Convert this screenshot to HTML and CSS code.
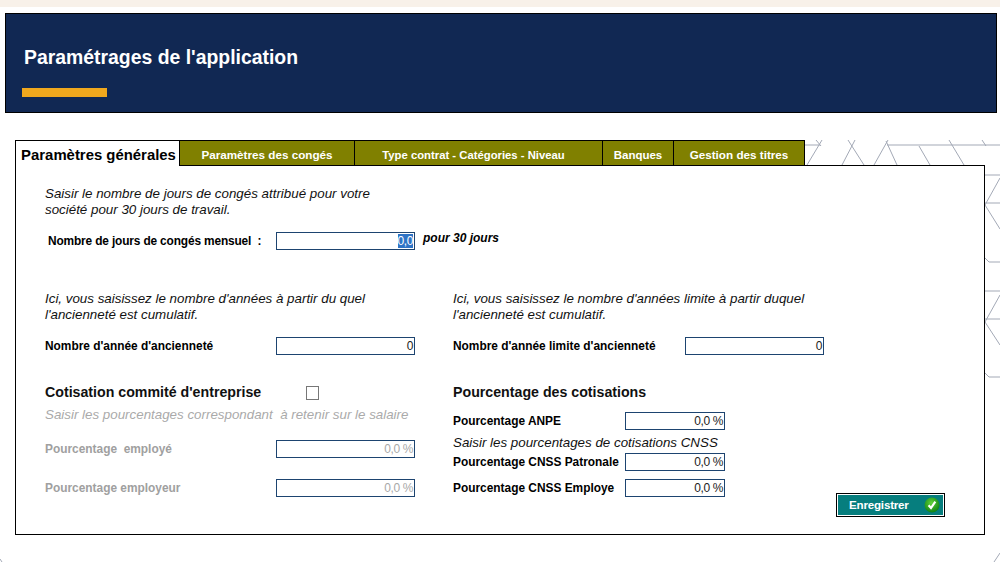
FILE: index.html
```html
<!DOCTYPE html>
<html lang="fr">
<head>
<meta charset="utf-8">
<title>Paramétrages de l'application</title>
<link rel="stylesheet" href="styles.css">
</head>
<body>
<svg class="backdrop" width="1000" height="562" viewBox="0 0 1000 562" fill="none" stroke="#a3a9b6" stroke-width="1">
  <path d="M805 145H820M822 140L807 165M816 140L821 146M848 140L864 165M855 140L842 165M888 140L874 165M886 141L897 165M887 145H1000M919 146L930 165M949 140L964 165M982 140L986 146"/>
  <path d="M984 175H1000M1000 178L985 205L1000 229M985 203H1000M984 257L989 262H1000M984 291H1000M1000 295L985 322L1000 345M985 319H1000M984 372L989 377H1000M1000 553L994 562M0 559L2 562"/>
</svg>
<header class="banner">
  <h1 class="banner-title">Paramétrages de l'application</h1>
  <div class="banner-accent"></div>
</header>
<main class="settings">
  <nav class="tabs">
    <div class="tab tab-active">Paramètres générales</div>
    <div class="tab tab-conges">Paramètres des congés</div>
    <div class="tab tab-type">Type contrat - Catégories - Niveau</div>
    <div class="tab tab-banques">Banques</div>
    <div class="tab tab-titres">Gestion des titres</div>
  </nav>
  <section class="panel">
    <div class="top-block">
      <p class="note note-top">Saisir le nombre de jours de congés attribué pour votre<br>société pour 30 jours de travail.</p>
      <div class="row row-top">
        <label class="label label-mensuel">Nombre de jours de congés mensuel&nbsp; :</label>
        <div class="field field-wide"><span class="selected">0,0</span></div>
        <span class="suffix">pour 30 jours</span>
      </div>
    </div>
    <div class="columns">
      <div class="col col-left">
        <p class="note">Ici, vous saisissez le nombre d'années à partir du quel<br>l'ancienneté est cumulatif.</p>
        <div class="row row-seniority">
          <label class="label label-left">Nombre d'année d'ancienneté</label>
          <div class="field field-wide">0</div>
        </div>
        <div class="heading-row">
          <h2 class="heading">Cotisation commité d'entreprise</h2>
          <span class="checkbox"></span>
        </div>
        <p class="note note-muted">Saisir les pourcentages correspondant&nbsp; à retenir sur le salaire</p>
        <div class="row row-employe">
          <label class="label label-left label-muted">Pourcentage&nbsp; employé</label>
          <div class="field field-wide field-muted">0,0 %</div>
        </div>
        <div class="row row-employeur">
          <label class="label label-left label-muted">Pourcentage employeur</label>
          <div class="field field-wide field-muted">0,0 %</div>
        </div>
      </div>
      <div class="col col-right">
        <p class="note">Ici, vous saisissez le nombre d'années limite à partir duquel<br>l'ancienneté est cumulatif.</p>
        <div class="row row-seniority">
          <label class="label label-limit">Nombre d'année limite d'ancienneté</label>
          <div class="field field-wide">0</div>
        </div>
        <h2 class="heading heading-right">Pourcentage des cotisations</h2>
        <div class="row row-anpe">
          <label class="label label-right">Pourcentage ANPE</label>
          <div class="field field-small">0,0 %</div>
        </div>
        <p class="note note-cnss">Saisir les pourcentages de cotisations CNSS</p>
        <div class="row row-patronale">
          <label class="label label-right">Pourcentage CNSS Patronale</label>
          <div class="field field-small">0,0 %</div>
        </div>
        <div class="row row-employee">
          <label class="label label-right">Pourcentage CNSS Employe</label>
          <div class="field field-small">0,0 %</div>
        </div>
      </div>
    </div>
    <button class="save" type="button">
      <span class="save-text">Enregistrer</span>
      <svg width="16" height="16" viewBox="0 0 16 16" aria-hidden="true">
        <defs><radialGradient id="g" cx="45%" cy="35%" r="70%"><stop offset="0" stop-color="#5fd03a"/><stop offset="1" stop-color="#0a7d12"/></radialGradient></defs>
        <circle cx="8" cy="8" r="7.5" fill="url(#g)"/>
        <path d="M4.6 8.2L7 11L11.3 4.6" fill="none" stroke="#fff" stroke-width="2.2"/>
      </svg>
    </button>
  </section>
</main>
</body>
</html>
```
FILE: styles.css
```css
* { box-sizing: border-box; }
html, body { margin: 0; padding: 0; }
body {
  width: 1000px;
  height: 562px;
  overflow: hidden;
  position: relative;
  padding: 13px 0 0 5px;
  background: linear-gradient(#f8f1e9 0 7px, #fff 7px);
  font-family: "Liberation Sans", Arial, sans-serif;
  color: #000;
}
.backdrop { position: absolute; left: 0; top: 0; }
.banner {
  position: relative;
  width: 992px;
  height: 100px;
  background: #112853;
  border: 1px solid #000;
  padding: 31px 0 0 18px;
}
.banner-title {
  margin: 0;
  font-size: 19.4px;
  line-height: 24px;
  font-weight: 700;
  color: #fff;
}
.banner-accent {
  width: 85px;
  height: 9px;
  margin: 19px 0 0 -2px;
  background: #f0a81e;
}
.settings {
  position: relative;
  width: 970px;
  margin: 27px 0 0 10px;
}
.tabs { display: flex; height: 26px; }
.tab {
  height: 26px;
  display: flex;
  align-items: center;
  justify-content: center;
  background: #808000;
  color: #fff;
  font-size: 11.7px;
  font-weight: 700;
  border: 1px solid #000;
  border-left: 0;
  padding-top: 2px;
}
.tab-active {
  width: 165px;
  background: #fff;
  color: #000;
  font-size: 14.9px;
  border-left: 1px solid #000;
  border-bottom: 0;
  position: relative;
  z-index: 1;
  padding: 2px 0 0 2px;
}
.tab-conges { width: 175px; }
.tab-type { width: 248px; font-size: 11.3px; padding: 4px 10px 0 0; }
.tab-banques { width: 71px; font-size: 11.5px; padding-top: 4px; }
.tab-titres { width: 131px; }
.panel {
  position: relative;
  width: 970px;
  height: 370px;
  margin-top: -1px;
  background: #fff;
  border: 1px solid #000;
  padding: 20px 0 0 29px;
}
.note {
  margin: 0;
  font-size: 13.35px;
  line-height: 16px;
  font-style: italic;
  color: #111;
}
.row { display: flex; align-items: center; }
.row-top { margin-top: 14px; }
.label { font-size: 11.9px; font-weight: 700; }
.label-mensuel { width: 231px; padding-left: 3px; flex: none; letter-spacing: -0.15px; }
.label-left { width: 231px; flex: none; }
.label-limit { width: 232px; flex: none; }
.label-right { width: 172px; flex: none; }
.label-muted { color: #a0a0a0; }
.field {
  height: 18px;
  background: #fff;
  border: 1px solid #1d4470;
  font-size: 12px;
  letter-spacing: -0.4px;
  line-height: 16px;
  text-align: right;
  padding-right: 1px;
  color: #222;
  flex: none;
}
.field-wide { width: 139px; }
.field-small { width: 100px; }
.field-muted { color: #a8a8a8; }
.selected { background: #2f74c6; color: #fff; }
.suffix {
  margin: -7px 0 0 8px;
  font-size: 12px;
  font-weight: 700;
  font-style: italic;
}
.columns {
  display: grid;
  grid-template-columns: 408px 1fr;
  margin-top: 41px;
}
.row-seniority { margin-top: 14px; }
.heading {
  margin: 0;
  font-size: 14.2px;
  line-height: 18px;
  font-weight: 700;
  color: #111;
}
.heading-row { display: flex; align-items: center; margin-top: 28px; }
.heading-row .heading { width: 261px; }
.heading-right { margin-top: 28px; }
.checkbox {
  width: 13px;
  height: 14px;
  margin-top: 2px;
  border: 1px solid #777;
  background: #fff;
}
.note-muted { margin-top: 6px; color: #aaa; }
.row-employe { margin-top: 17px; }
.row-employeur { margin-top: 21px; }
.row-anpe { margin-top: 11px; }
.note-cnss { margin-top: 5px; }
.row-patronale { margin-top: 2px; }
.row-employee { margin-top: 8px; }
.save {
  position: absolute;
  left: 820px;
  top: 327px;
  width: 109px;
  height: 24px;
  display: flex;
  align-items: center;
  gap: 15px;
  padding: 0 0 0 12px;
  background: #067e7e;
  border: 1px solid #000;
  outline: 1px solid #fff;
  outline-offset: -2px;
  color: #fff;
  font-family: "Liberation Sans", Arial, sans-serif;
  font-size: 11.6px;
  font-weight: 700;
  letter-spacing: -0.2px;
}
.save-text { margin-top: -2px; }
```
